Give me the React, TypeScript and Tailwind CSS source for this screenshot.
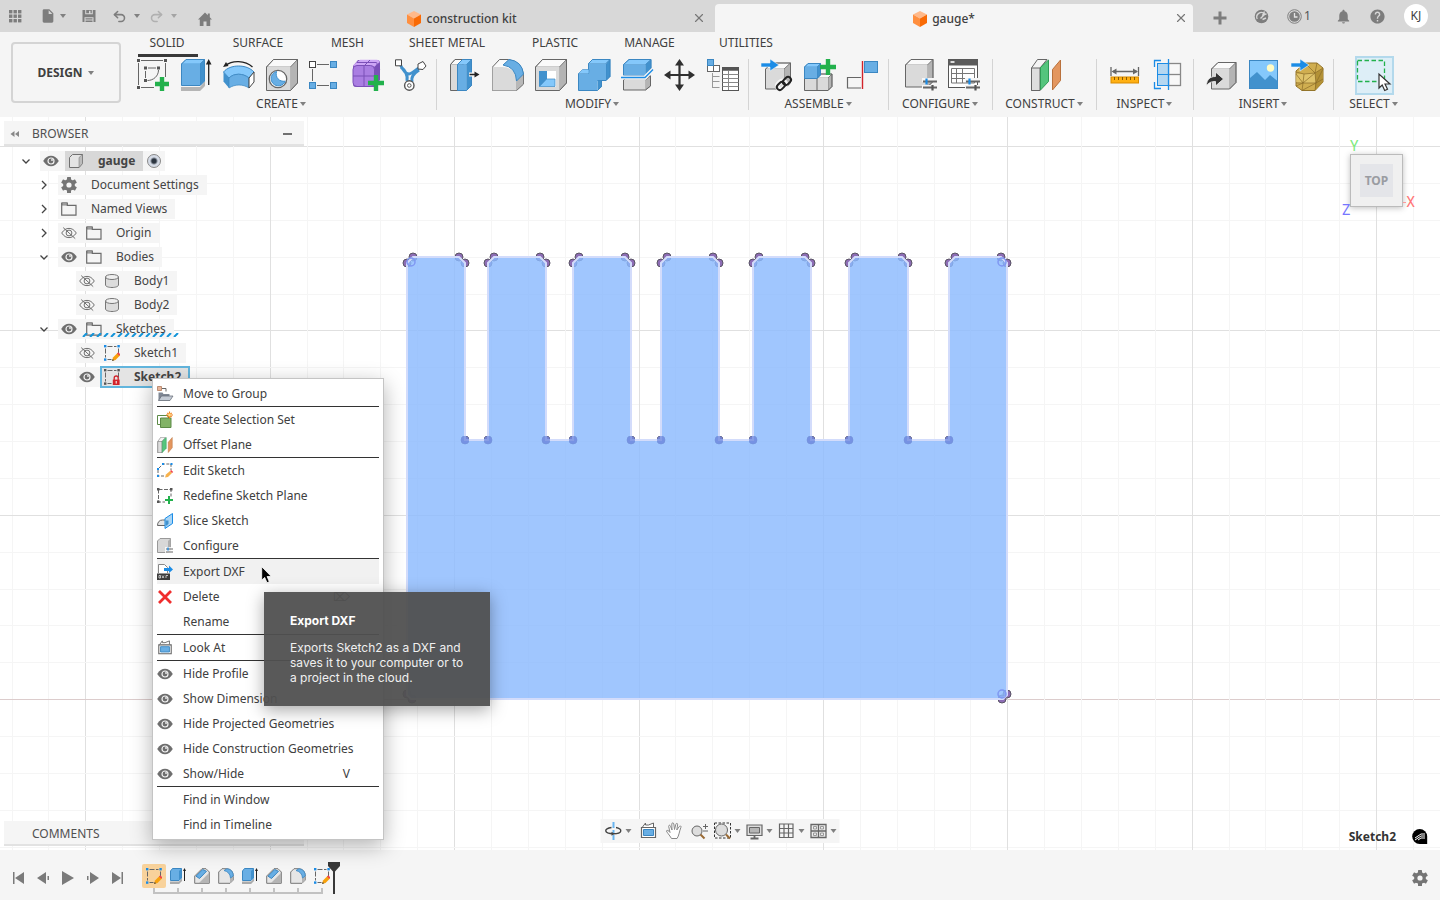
import React, { useState } from 'react';
import clsx from 'clsx';
import { MdVisibility, MdNotifications, MdHelp, MdInsertDriveFile } from 'react-icons/md';
import { Undo2, Redo2, X } from 'lucide-react';

const BLUE = '#68aee4';
const BLUE_DARK = '#4191cd';
const BLUE_LIGHT = '#84c8fb';
const LINE = '#666666';
const GREEN = '#22b14c';

/* ---------- small shared glyphs ---------- */

const Caret = ({ className = 'text-[#808080]' }: { className?: string }) => (
  <svg width="8" height="6" viewBox="0 0 8 6" className={clsx('shrink-0', className)} aria-hidden="true">
    <path d="M1 1h6L4 5z" fill="currentColor" />
  </svg>
);

const Gear = ({ size = 16 }: { size?: number }) => (
  <svg width={size} height={size} viewBox="0 0 16 16" aria-hidden="true">
    <g fill="#757575">
      {[0, 60, 120].map((a) => (
        <rect key={a} x="6" y="0" width="4" height="16" rx="0.6" transform={`rotate(${a} 8 8)`} />
      ))}
      <circle cx="8" cy="8" r="5.9" />
    </g>
    <circle cx="8" cy="8" r="2.6" fill="#f5f5f5" />
  </svg>
);

const EyeHidden = () => (
  <svg width="16" height="14" viewBox="0 0 16 14" fill="none" stroke="#707070" aria-hidden="true">
    <path d="M.7 7C3 3.6 5.3 2.4 8 2.4S13 3.6 15.3 7C13 10.4 10.7 11.6 8 11.6S3 10.4.7 7z" />
    <circle cx="8" cy="7" r="2.9" />
    <path d="M2.2 1.6l12 11" />
  </svg>
);

// the lens carries its own ring so that the pupil reads as a dark dot
const EyeOpen = () => (
  <svg width="16" height="12" viewBox="0 0 16 12" aria-hidden="true">
    <path d="M.2 6C2.500 2.300 5 .800 8 .800S13.500 2.300 15.800 6C13.500 9.700 11 11.200 8 11.200S2.500 9.700.2 6z" fill="#6e6e6e" />
    <circle cx="8" cy="6" r="3" fill="#6e6e6e" stroke="#f2f2f2" strokeWidth="1.200" />
    <circle cx="9" cy="5" r=".9" fill="#f2f2f2" />
  </svg>
);

const Folder = () => (
  <svg width="16" height="14" viewBox="0 0 16 14" fill="none" stroke="#6b6b6b" aria-hidden="true">
    <path d="M.7 1h5.6v2.4H15v9.8H.7z" strokeWidth="1.2" />
    <path d="M1 1h5.2v2H1z" fill="#bdbdbd" strokeWidth=".8" />
  </svg>
);

const ComponentCube = () => (
  <svg width="16" height="16" viewBox="0 0 16 16" stroke="#707070" strokeLinejoin="round" aria-hidden="true">
    <path d="M1.5 4.5L4.5 1.5h10v9l-3.5 4h-9.5z" fill="#e4e4e4" />
    <path d="M11 4.5v10l3.5-4v-9z" fill="#bcbcbc" strokeWidth=".5" />
  </svg>
);

const BodyIcon = () => (
  <svg width="16" height="16" viewBox="0 0 16 16" fill="#dcdcdc" stroke="#777" aria-hidden="true">
    <path d="M1.5 4v8c0 1.4 2.900 2.500 6.500 2.500s6.500-1.100 6.500-2.500V4" />
    <ellipse cx="8" cy="4" rx="6.500" ry="2.500" fill="#eee" />
  </svg>
);

const SketchIcon = ({ locked = false }: { locked?: boolean }) => (
  <svg width="16" height="16" viewBox="0 0 16 16" aria-hidden="true">
    <g fill="none" stroke="#666">
      <path d="M3.500 1.500h9M1.500 3.500v9M14.500 3.500v5M3.500 14.500h4" strokeDasharray="5 1.500" />
    </g>
    <g fill={locked ? '#555' : '#1b8ce6'}>
      <rect x="0" y="0" width="2.400" height="2.400" />
      <rect x="13.400" y="0" width="2.400" height="2.400" />
      <rect x="0" y="13.400" width="2.400" height="2.400" />
    </g>
    {locked ? (
      <g>
        <path d="M10.200 11V9a2 2 0 014 0v2" fill="none" stroke="#d2232a" strokeWidth="1.300" />
        <rect x="8.800" y="10.600" width="6.800" height="5.400" fill="#d2232a" />
        <path d="M12.200 12v2.600" stroke="#fff" />
      </g>
    ) : (
      <g>
        <path d="M8 16l1-3.500 4.500-4.500 2.500 2.500L11.500 15z" fill="#f7a10c" />
        <path d="M13 8.500l1.300-1.300 2.200 2.200-1.300 1.300z" fill="#f0414b" />
        <path d="M8 16l.7-2 1.500 1.300z" fill="#444" />
      </g>
    )}
  </svg>
);

const OrangeCube = () => (
  <svg width="14" height="16" viewBox="0 0 14 16" aria-hidden="true">
    <path d="M7 0l7 3.500L7 7.500 0 3.500z" fill="#ffb98a" />
    <path d="M0 3.500l7 4V16l-7-4z" fill="#ff8f3f" />
    <path d="M14 3.500l-7 4V16l7-4z" fill="#f96a05" />
  </svg>
);

const PlanesIcon = () => (
  <g strokeLinejoin="round">
    <path d="M3.500 9l6-8.500H19L12 9v22.500H3.500z" fill="#f4f4f4" stroke={LINE} />
    <path d="M3.500 9h8.500v22.500H3.500z" fill="#dedede" stroke={LINE} />
    <path d="M12.500 8.500l8-7.500v21.500l-8 8.500z" fill="#54c57d" stroke="#2f9c55" />
    <path d="M24.500 10.500l8-9.500v20.500l-8 9.500z" fill="#e3965f" stroke="#b9713c" />
  </g>
);

/* grey box with a light top and a darker right side */
interface BoxProps {
  x: number; y: number; w: number; h: number; dx: number; dy: number; blue?: boolean;
}
const Box3d = ({ x, y, w, h, dx, dy, blue }: BoxProps) => (
  <g stroke={blue ? '#3b87c2' : LINE} strokeLinejoin="round">
    <path d={`M${x} ${y}l${dx} ${-dy}h${w}l${-dx} ${dy}z`} fill={blue ? BLUE_LIGHT : '#fafafa'} strokeWidth=".6" />
    <path d={`M${x + w} ${y}l${dx} ${-dy}v${h}l${-dx} ${dy}z`} fill={blue ? BLUE_DARK : '#b4b4b4'} strokeWidth=".6" />
    <path d={`M${x} ${y}h${w}v${h}h${-w}z`} fill={blue ? BLUE : '#dadada'} stroke="none" />
    <path d={`M${x} ${y}l${dx} ${-dy}h${w}v${h}l${-dx} ${dy}h${-w}z`} fill="none" />
  </g>
);

const GreenPlus = ({ x, y, r = 7 }: { x: number; y: number; r?: number }) => (
  <path d={`M${x - r} ${y}h${2 * r}M${x} ${y - r}v${2 * r}`} stroke={GREEN} strokeWidth="4.400" fill="none" />
);

const Sliders = () => (
  <g fill="none">
    <path d="M19 21h17M19 28h17" stroke="#f5f5f5" strokeWidth="4" />
    <path d="M20 22.500h14M20 28.500h14" stroke="#666" strokeWidth="1.800" />
    <path d="M23.500 19.500v6" stroke="#1b8ce6" strokeWidth="2.200" />
    <path d="M29.500 26v5.500" stroke="#555" strokeWidth="2.200" />
  </g>
);

/* ---------- ribbon icons, 33 x 33 ---------- */

const icons: Record<string, React.ReactNode> = {
  sketch: (
    <g>
      <g fill="none" stroke={LINE}>
        <path d="M5 1.500h22M2.500 4v22M29.500 4v14M5 28.500h13M12 9h8M9.500 12v7" />
        <path d="M22.500 11c0 6-5 10.500-11 10.500" />
      </g>
      <g fill="#555">
        {[[1, 0], [28, 0], [1, 27], [8, 7.5], [21, 7.5], [8, 20]].map(([x, y]) => (
          <rect key={`${x}-${y}`} x={x} y={y} width="3" height="3" />
        ))}
      </g>
      <GreenPlus x={26} y={25} />
    </g>
  ),
  extrude: (
    <g>
      <path d="M2 28h19l5-6v5l-5 5H2z" fill="#b5b5b5" />
      <Box3d x={2.5} y={5} w={18.5} h={21.5} dx={4.5} dy={4.5} blue />
      <path d="M29.700 3v23" stroke="#222" strokeWidth="1.300" />
      <path d="M29.700 0l2.800 5.500h-5.600z" fill="#222" />
    </g>
  ),
  revolve: (
    <g strokeLinejoin="round">
      <path d="M3.500 6.500C10 1 23 1 30.500 8" fill="none" stroke="#222" strokeWidth="1.300" />
      <path d="M1 8l3-5 2.500 4z" fill="#222" />
      <path d="M1.500 13C8 5 25 5 32 13l-5 6c-6-5-15-5-20 0z" fill={BLUE_LIGHT} stroke="#3b87c2" />
      <path d="M1.500 13v9.500L7 29V19z" fill={BLUE_DARK} />
      <path d="M7 19c5-5 14-5 20 0v10c-6-4-14-4-20 0z" fill={BLUE} stroke="#3b87c2" strokeWidth=".7" />
      <path d="M27 19l5-6v10l-5 6z" fill="#fff" stroke="#444" />
    </g>
  ),
  hole: (
    <g>
      <Box3d x={1.5} y={8} w={24} h={23.5} dx={7} dy={7.5} />
      <circle cx="13" cy="20" r="8.700" fill="#fff" stroke={LINE} strokeWidth="1.300" />
      <path d="M11.500 12.500a7.300 7.300 0 108.700 9.700c-6 .8-10.200-3.700-8.700-9.700z" fill={BLUE} stroke={BLUE_DARK} />
    </g>
  ),
  pattern: (
    <g>
      <path d="M9 5.500h12M9 26.500h12M4.500 10v12" stroke={LINE} fill="none" />
      <rect x="1.500" y="2.500" width="6" height="6" fill="#fff" stroke="#444" />
      <g fill={BLUE} stroke="#3b87c2">
        <rect x="22.500" y="2.500" width="6" height="6" />
        <rect x="1.500" y="23.500" width="6" height="6" />
        <rect x="22.500" y="23.500" width="6" height="6" />
      </g>
    </g>
  ),
  form: (
    <g>
      <path d="M7 1h19q3 0 3 3v17l-6 7H5q-3 0-3-3V7z" fill="#7b50b8" />
      <path d="M9 .8h17q2.500.2 2.500 2.500L23 8H3q-1-1.500 0-2.500z" fill="#cda6f5" />
      <rect x="2" y="6.500" width="21.500" height="21" rx="4" fill="#aa7ee2" stroke="#7b50b8" />
      <path d="M2 17h21l6-7M13 27V7l6-6M6 3.500h19q1 0 1 1v19" fill="none" stroke="#7b50b8" />
      <GreenPlus x={25} y={24} r={8} />
    </g>
  ),
  pipe: (
    <g strokeLinejoin="round">
      <path d="M6 5c4 9 7 10 9 10s7-4 11-7M7 8c6 5 7 9 6 14M25 11c-6 4-8 7-7 12" fill="none" stroke={BLUE_DARK} strokeWidth="3" />
      <rect x="1.500" y=".8" width="6" height="6" fill="#fff" stroke="#444" />
      <path d="M24 5l5-2.500 3 4.500-3 3.500-5-.5z" fill="#fff" stroke="#444" />
      <circle cx="15.300" cy="26.500" r="4.700" fill="#fff" stroke="#555" strokeWidth="1.400" />
      <circle cx="15.300" cy="26.500" r="1.800" fill="none" stroke="#555" />
    </g>
  ),
  presspull: (
    <g>
      <Box3d x={3.5} y={5.5} w={8} h={26} dx={4.5} dy={5} />
      <Box3d x={10.5} y={5.5} w={9} h={26} dx={5} dy={5} blue />
      <path d="M22 15.500h7" stroke="#f5f5f5" strokeWidth="4" />
      <path d="M22.500 15.500H29" stroke="#222" strokeWidth="1.500" />
      <path d="M32.500 15.500l-5-3v6z" fill="#222" />
    </g>
  ),
  fillet: (
    <g strokeLinejoin="round">
      <path d="M2.500 8l7-7.500h9Q33 3 33.500 17v8l-7 6.500H2.500z" fill="#fafafa" stroke={LINE} />
      <path d="M26.500 20l7-6v11l-7 6.500z" fill="#b8b8b8" stroke={LINE} strokeWidth=".6" />
      <path d="M2.500 8h10q14 1 14 14v9.500h-24z" fill="#dadada" />
      <path d="M13 6l6-5.500Q32 2 33.500 15l-7 7Q26 8 13 6z" fill={BLUE} stroke="#3b87c2" />
    </g>
  ),
  shell: (
    <g>
      <Box3d x={2.5} y={8} w={24} h={23.5} dx={7} dy={7.5} />
      <rect x="6" y="12" width="17" height="16" fill="#fff" />
      <path d="M6 12h8v9l-8 7z" fill={BLUE_DARK} />
      <path d="M6.500 27.500l7-7.500H22v7.500z" fill={BLUE_LIGHT} stroke="#3b87c2" strokeWidth=".7" />
    </g>
  ),
  combine: (
    <g>
      <Box3d x={12.5} y={4.5} w={17.5} h={17} dx={4} dy={4} blue />
      <path d="M2.500 14.500l4-4H13v4z" fill={BLUE_LIGHT} stroke="#3b87c2" strokeWidth=".6" />
      <path d="M21.500 21.500h4.500v6l-4.500 4z" fill={BLUE_DARK} />
      <path d="M2.500 14.500h11v-2h8v19h-19z" fill={BLUE} />
      <path d="M2.500 14.500v17h19l4-4v-6" fill="none" stroke="#3b87c2" />
    </g>
  ),
  split: (
    <g>
      <Box3d x={4.5} y={21} w={22} h={10} dx={5} dy={4} />
      <Box3d x={4.5} y={5.5} w={22} h={11} dx={5.5} dy={5} blue />
      <path d="M2 18.500h24l8-8" fill="none" stroke="#f5f5f5" strokeWidth="4" />
      <path d="M2 18.500h24l8-8" fill="none" stroke="#1b8ce6" strokeWidth="1.400" />
    </g>
  ),
  move: (
    <g fill="#303030">
      <path d="M17.500 4v24M6 16h24" stroke="#303030" strokeWidth="2.200" />
      <path d="M17.500 0l4.500 6.500h-9zM17.500 32l4.500-6.500h-9zM2 16l6.500-4.500v9zM33 16l-6.500-4.500v9z" />
    </g>
  ),
  params: (
    <g fill="none" stroke={LINE}>
      <rect x="2.500" y="6.500" width="6" height="6" fill="#fff" />
      <rect x="8.500" y="6.500" width="6" height="6" fill="#fff" />
      <rect x="2.500" y=".5" width="6" height="6" fill={BLUE} stroke="#3b87c2" />
      <path d="M7.500 14v15M7.500 17.500h7M7.500 22.500h7M7.500 28.500h7" stroke="#999" />
      <rect x="17.500" y="8.500" width="16" height="23" fill="#fff" stroke="#555" />
      <path d="M17.500 10h16" stroke="#555" strokeWidth="3.500" />
      <path d="M17.500 15.500h16M17.500 19.500h16M17.500 23.500h16M17.500 27.500h16M23.500 12v19" stroke="#888" />
    </g>
  ),
  insertComponent: (
    <g>
      <Box3d x={6.5} y={10} w={18.5} h={20} dx={6.5} dy={6} />
      <path d="M2 4h9V0l9 6-9 6V8H2z" fill="#1b8ce6" stroke="#f5f5f5" strokeWidth=".6" />
      <g fill="none" stroke="#f5f5f5" strokeWidth="5">
        <rect x="18" y="23" width="9" height="6.500" rx="3.200" transform="rotate(-45 22.500 26.200)" />
      </g>
      <g fill="none" stroke="#222" strokeWidth="2">
        <rect x="17.500" y="24" width="9" height="5.800" rx="2.900" transform="rotate(-45 22 27)" />
        <rect x="23.500" y="19" width="9" height="5.800" rx="2.900" transform="rotate(-45 28 22)" />
      </g>
    </g>
  ),
  newComponent: (
    <g>
      <Box3d x={2.5} y={19} w={12.5} h={12.5} dx={3} dy={3} />
      <Box3d x={15} y={19} w={11} h={12.5} dx={4} dy={4} />
      <Box3d x={2.5} y={8} w={12.5} h={11.5} dx={3.5} dy={3.5} blue />
      <GreenPlus x={26} y={8} r={8} />
    </g>
  ),
  joint: (
    <g>
      <rect x="19.500" y="2.500" width="13" height="11" fill={BLUE} stroke="#3b87c2" />
      <path d="M16 18.500H2.500v10.500H16" fill="none" stroke={LINE} strokeWidth="1.200" />
      <path d="M17.500 2v28" stroke="#d2232a" strokeWidth="1.400" />
    </g>
  ),
  configure: (
    <g>
      <Box3d x={2.5} y={6} w={22} h={22} dx={5.5} dy={5.5} />
      <Sliders />
    </g>
  ),
  configTable: (
    <g>
      <rect x="2.500" y=".5" width="29" height="28" fill="#fff" stroke="#555" />
      <path d="M2 3.500h30" stroke="#5c5c5c" strokeWidth="6" />
      <path d="M4.500 3h4" stroke="#fff" strokeWidth="1.600" />
      <path d="M5.500 9.500h23v14.500h-23zM5.500 14.500h23M5.500 19.500h23M10.500 9.500V24M16.500 9.500V24" fill="none" stroke="#777" />
      <Sliders />
    </g>
  ),
  planes: <PlanesIcon />,
  measure: (
    <g>
      <path d="M4 8v9M31.500 8v9M6 12.500h24" stroke={LINE} strokeWidth="1.300" />
      <path d="M4.500 12.500l5-3v6zM31 12.500l-5-3v6z" fill={LINE} />
      <rect x="4" y="18" width="27.500" height="6" fill="#ffb012" stroke="#d98b00" />
      <path d="M7.500 18v3M11.500 18v3M15.500 18v3M19.500 18v3M23.500 18v3M27.500 18v3" stroke="#8a5a00" />
    </g>
  ),
  section: (
    <g fill="none">
      <rect x="18.500" y="4.500" width="12" height="22" fill="#f8f8f8" stroke="#888" strokeWidth="1.300" />
      <rect x="7.500" y="4.500" width="11" height="22" fill="#b4d7f1" stroke="#1b8ce6" />
      <path d="M7.500 15.500h11" stroke="#1b8ce6" />
      <path d="M18.500 15.500h12" stroke="#888" strokeWidth="1.300" />
      <path d="M11 1.500H4.500V8M4.500 23v6.500H11M18.500 0v31" stroke="#1b8ce6" strokeWidth="1.300" />
    </g>
  ),
  derive: (
    <g>
      <Box3d x={7.5} y={10} w={18} h={20} dx={6.5} dy={6.5} />
      <path d="M2.500 27c0-7 4-9.500 9-9.500V13l8 7-8 7v-4.500c-4 0-7 1-9 4.500z" fill="#333" stroke="#f5f5f5" strokeWidth=".8" />
    </g>
  ),
  canvas: (
    <g>
      <rect x="2.500" y="1.500" width="28" height="28" fill={BLUE_LIGHT} stroke="#3b87c2" />
      <path d="M3 19l7-6 8 8 5-5 7.500 6v7.500H3z" fill={BLUE_DARK} />
      <circle cx="23.500" cy="9" r="3.700" fill="#fffbc4" />
    </g>
  ),
  mesh: (
    <g strokeLinejoin="round">
      <path d="M6 12l9-8h12l6 5v14l-8 8.500H12L6 27z" fill="#d0ae50" stroke="#94752a" />
      <path d="M25 14l8-5v14l-8 8.500z" fill="#b39136" />
      <path d="M6 15l8 0-1 9-7-1zM14 15l11-1 1 10-13 0z" fill="#ead07c" opacity=".6" />
      <path d="M6 13l8 2 11-1 8-5M14 15l-1 9 12-10 1 10 7-14M6 24h20l7-4M13 24l-1 7.500L26 24l-1 7.500M6 15l7 9-7 3M15 4l10 10 2-10" fill="none" stroke="#8a6c28" strokeWidth=".7" />
      <path d="M1 4h9V0l9 6-9 6V8H1z" fill="#1b8ce6" stroke="#f5f5f5" strokeWidth=".6" />
    </g>
  ),
  select: (
    <g>
      <rect x="-.5" y="1.500" width="27" height="21" fill="none" stroke={GREEN} strokeWidth="1.300" strokeDasharray="4.500 2.500" />
      <path d="M21 15v14l3.200-3 2.500 5.500 2.800-1.200-2.500-5.300H32z" fill="#fff" stroke="#333" strokeWidth="1.200" />
    </g>
  ),
};

interface ToolGroup {
  name: string;
  tools: string[];
  width: string;
}

const toolGroups: ToolGroup[] = [
  { name: 'CREATE', tools: ['sketch', 'extrude', 'revolve', 'hole', 'pattern', 'form', 'pipe'], width: 'w-[309px]' },
  { name: 'MODIFY', tools: ['presspull', 'fillet', 'shell', 'combine', 'split', 'move', 'params'], width: 'w-[311px]' },
  { name: 'ASSEMBLE', tools: ['insertComponent', 'newComponent', 'joint'], width: 'w-[139px]' },
  { name: 'CONFIGURE', tools: ['configure', 'configTable'], width: 'w-[103px]' },
  { name: 'CONSTRUCT', tools: ['planes'], width: 'w-[103px]' },
  { name: 'INSPECT', tools: ['measure', 'section'], width: 'w-[96px]' },
  { name: 'INSERT', tools: ['derive', 'canvas', 'mesh'], width: 'w-[139px]' },
  { name: 'SELECT', tools: ['select'], width: 'w-[80px]' },
];

const ribbonTabs = [
  { name: 'SOLID', width: 'w-[80px]' },
  { name: 'SURFACE', width: 'w-[102px]' },
  { name: 'MESH', width: 'w-[77px]' },
  { name: 'SHEET METAL', width: 'w-[122px]' },
  { name: 'PLASTIC', width: 'w-[94px]' },
  { name: 'MANAGE', width: 'w-[95px]' },
  { name: 'UTILITIES', width: 'w-[98px]' },
];

/* ---------- header ---------- */

const DocumentTab = ({ title, active }: { title: string; active?: boolean }) => (
  <div className={clsx('flex flex-1 items-center', active ? 'mt-1 rounded-t-[4px] bg-[#f5f5f5] pr-1' : 'pt-1 pr-2')}>
    <button className="flex flex-1 items-center justify-center gap-[5px] pt-0.5 font-medium text-[#404040]">
      <OrangeCube />
      {title}
    </button>
    <button aria-label={`Close ${title}`} className="flex w-4 justify-center">
      <X size={14} color="#777" />
    </button>
  </div>
);

const Header = () => (
  <header className="flex h-8 shrink-0 bg-[#d8d8d8] text-[#7d7d7d]">
    <div className="flex w-[233px] items-center pl-2">
      <button aria-label="Data panel" className="mr-[18px]">
        <svg width="14" height="14" viewBox="0 0 14 14" fill="currentColor">
          {[1, 5.5, 10].map((x) => [1, 5.5, 10].map((y) => <rect key={`${x}${y}`} x={x} y={y} width="3.400" height="3.400" />))}
        </svg>
      </button>
      <button aria-label="File" className="flex items-center gap-[3px]">
        <MdInsertDriveFile size={16} />
        <Caret />
      </button>
      <button aria-label="Save" className="mr-4 ml-[15px]">
        <svg width="14" height="14" viewBox="0 0 14 14" fill="currentColor">
          <path d="M.5 1h2.700v4.300h7.600V1h2.700v12h-2V8.300h-9V13h-2z" />
          <path d="M4.200 1h5.600v3.300H8.500V1.800h-1.500v2.500H4.200zM3.500 9.300h7v1.300h-7zM3.500 11.600h7v1.400h-7z" />
        </svg>
      </button>
      <button aria-label="Undo" className="mr-2 flex items-center gap-1.5">
        <Undo2 size={15} strokeWidth={2.5} />
        <Caret />
      </button>
      <button aria-label="Redo" className="flex items-center gap-1.5 text-[#b0b0b0]">
        <Redo2 size={15} strokeWidth={2.5} />
        <Caret className="text-[#a4a4a4]" />
      </button>
      <button aria-label="Home" className="ml-5 pt-1.5">
        <svg width="14" height="14" viewBox="0 0 14 14" fill="currentColor">
          <path d="M7 .5l2.800 2.700V1.500h2v3.700L14 7.500h-1.800V14H8.500V9.500h-3V14H1.800V7.500H0z" />
        </svg>
      </button>
    </div>
    <DocumentTab title="construction kit" />
    <DocumentTab title="gauge*" active />
    <div className="flex w-[247px] items-center pl-5">
      <button aria-label="New tab" className="pt-1">
        <svg width="14" height="14" viewBox="0 0 14 14">
          <path d="M7 .5v13M.5 7h13" stroke="currentColor" strokeWidth="3" />
        </svg>
      </button>
      <button aria-label="Extensions" className="ml-[27px]">
        <svg width="15" height="15" viewBox="0 0 15 15">
          <circle cx="7.500" cy="7.500" r="6.800" fill="currentColor" />
          <path d="M3.200 10a4.600 4.600 0 017.300-5.300" stroke="#d8d8d8" strokeWidth="1.300" fill="none" />
          <path d="M6.500 9.500L11 5M8.500 10.500l3.500-1.500M10.500 2.500L9 5.500l3.500-.5" stroke="#d8d8d8" strokeWidth="1.400" fill="none" />
        </svg>
      </button>
      <button aria-label="Job status" className="ml-[18px] flex items-center gap-0.5 text-[#555]">
        <svg width="15" height="15" viewBox="0 0 15 15" fill="none">
          <circle cx="7.500" cy="7.500" r="6.800" stroke="#808080" />
          <circle cx="7.500" cy="7.500" r="5.300" fill="#808080" />
          <path d="M7.500 4v4h3" stroke="#e4e4e4" strokeWidth="1.300" />
        </svg>
        1
      </button>
      <button aria-label="Notifications" className="ml-6">
        <MdNotifications size={17} />
      </button>
      <button aria-label="Help" className="ml-[17px]">
        <MdHelp size={17} />
      </button>
      <button className="ml-[18px] size-6 rounded-full bg-white text-[#404040]">KJ</button>
    </div>
  </header>
);

/* ---------- ribbon ---------- */

const Ribbon = () => (
  <section className="flex h-[85px] shrink-0 overflow-hidden bg-[#f5f5f5] text-[#404040]">
    <button className="mt-[10px] mr-1.5 ml-[11px] flex h-[61px] w-[110px] shrink-0 items-center justify-center gap-1 rounded-[4px] border-2 border-[#d4d4d4] font-bold">
      DESIGN <Caret />
    </button>
    <div>
      <nav className="flex h-6 items-center">
        {ribbonTabs.map((tab, i) => (
          <button key={tab.name} className={clsx('relative h-6 shrink-0 pb-0.5', tab.width)}>
            {tab.name}
            {i === 0 && <span className="absolute -bottom-px left-[11px] h-[3px] w-[60px] bg-[#383838]" />}
          </button>
        ))}
      </nav>
      <div className="flex">
        {toolGroups.map((group, i) => (
          <React.Fragment key={group.name}>
            {i > 0 && <div className="mt-[3px] h-[51px] w-px shrink-0 bg-[#d4d4d4]" />}
            <div className={clsx('flex shrink-0 flex-col items-center', group.width)}>
              <div className="flex h-[39px]">
                {group.tools.map((tool) => (
                  <button
                    key={tool}
                    aria-label={tool}
                    className={clsx(
                      'flex items-center justify-center',
                      tool === 'select' ? 'w-[39px] border-2 border-[#b3d9ec] bg-[#ddeef7]' : 'w-[43px]'
                    )}
                  >
                    <svg width="33" height="33" viewBox="0 0 33 33" className="overflow-visible">
                      {icons[tool]}
                    </svg>
                  </button>
                ))}
              </div>
              <button className="flex h-[18px] items-center gap-px">
                {group.name} <Caret />
              </button>
            </div>
          </React.Fragment>
        ))}
      </div>
    </div>
  </section>
);

/* ---------- browser tree ---------- */

interface TreeNode {
  name: string;
  level: 'root' | 'group' | 'leaf';
  open?: boolean;
  visible?: boolean;
  icon: React.ReactNode;
  selected?: boolean;
}

const treeNodes: TreeNode[] = [
  { name: 'gauge', level: 'root', open: true, visible: true, icon: <ComponentCube /> },
  { name: 'Document Settings', level: 'group', open: false, icon: <Gear /> },
  { name: 'Named Views', level: 'group', open: false, icon: <Folder /> },
  { name: 'Origin', level: 'group', open: false, visible: false, icon: <Folder /> },
  { name: 'Bodies', level: 'group', open: true, visible: true, icon: <Folder /> },
  { name: 'Body1', level: 'leaf', visible: false, icon: <BodyIcon /> },
  { name: 'Body2', level: 'leaf', visible: false, icon: <BodyIcon /> },
  { name: 'Sketches', level: 'group', open: true, visible: true, icon: <Folder /> },
  { name: 'Sketch1', level: 'leaf', visible: false, icon: <SketchIcon /> },
  { name: 'Sketch2', level: 'leaf', visible: true, icon: <SketchIcon locked />, selected: true },
];

const indents = { root: 'pl-2', group: 'pl-[26px]', leaf: 'pl-[44px]' };

const TreeRow = ({ node }: { node: TreeNode }) => (
  <li className={clsx('flex h-5', indents[node.level])}>
    <button className="flex w-7 items-center justify-center" aria-label={`Expand ${node.name}`} disabled={node.open === undefined}>
      {node.open !== undefined && (
        <svg width="10" height="10" viewBox="0 0 10 10" fill="none" stroke="#444" strokeWidth="1.300">
          <path d={node.open ? 'M1.500 3.500L5 7l3.500-3.500' : 'M3 1l4 4-4 4'} />
        </svg>
      )}
    </button>
    <div className="relative flex bg-[#f5f5f5]">
      {node.visible !== undefined && (
        <button aria-label={`Toggle ${node.name}`} className="mr-[3px] flex w-[22px] items-center justify-center">
          {node.visible ? <EyeOpen /> : <EyeHidden />}
        </button>
      )}
      <button
        className={clsx(
          'flex items-center gap-[11px] pr-2',
          node.level === 'root' && 'bg-[#d8d8d8] font-bold',
          node.selected && 'bg-[#e4e4e4] font-bold outline-2 -outline-offset-1 outline-[#62b5dd]'
        )}
      >
        <span className="flex w-[22px] justify-center">{node.icon}</span>
        {node.name}
      </button>
      {node.level === 'root' && (
        <input
          type="radio"
          name="active-component"
          aria-label="Activate gauge"
          defaultChecked
          className="mx-1 size-3.5 appearance-none self-center rounded-full border border-[#888] bg-[radial-gradient(circle,#2c3540_0_2px,#d5dbe6_4px)]"
        />
      )}
      {node.name === 'Sketches' && (
        <svg className="absolute bottom-0.5 left-6 h-1 w-[98px]" aria-hidden="true">
          {Array.from({ length: 14 }, (_, i) => (
            <path key={i} d={`M${i * 7 + 1} 4l4-4`} stroke="#1494d8" strokeWidth="2" />
          ))}
        </svg>
      )}
    </div>
  </li>
);

const BrowserPanel = () => (
  <aside className="relative ml-1 flex w-[300px] flex-col justify-between pt-1 pb-1">
    <div>
      <div className="flex h-[25px] items-center border-b-2 border-[#e2e2e2] bg-[#f5f5f5] pt-0.5 pr-3 pl-1.5">
        <button aria-label="Collapse browser" className="mr-3">
          <svg width="10" height="8" viewBox="0 0 10 8" fill="#888">
            <path d="M4.500 1v6L.5 4zM9 1v6L5 4z" />
          </svg>
        </button>
        <h2 className="flex-1 text-[#505050]">BROWSER</h2>
        <button aria-label="Minimize browser" className="h-0.5 w-[9px] bg-[#707070]" />
      </div>
      <ul className="mt-[5px] flex flex-col gap-1">
        {treeNodes.map((node) => (
          <TreeRow key={node.name} node={node} />
        ))}
      </ul>
    </div>
    <div className="flex h-[25px] items-center border-b-2 border-[#e2e2e2] bg-[#f5f5f5] pt-0.5 pl-7 text-[#505050]">COMMENTS</div>
  </aside>
);

/* ---------- canvas ---------- */

// left and right edge of every tooth of the gauge
const teeth = [
  [407, 465], [488, 546], [573, 631], [661, 719], [753, 811], [849, 908], [949, 1007],
];
const TOP = 140;
const SLOT = 323;
const BOTTOM = 582;

const outline = () => {
  const pts: string[] = [`M407 ${BOTTOM - 4}`];
  teeth.forEach(([l, r], i) => {
    pts.push(`L${l} ${TOP + 6}L${l + 6} ${TOP}L${r - 6} ${TOP}L${r} ${TOP + 6}`);
    if (i < teeth.length - 1) {
      pts.push(`L${r} ${SLOT}L${teeth[i + 1][0]} ${SLOT}`);
    }
  });
  pts.push(`L1007 ${BOTTOM - 4}L1003 ${BOTTOM}L411 ${BOTTOM}Z`);
  return pts.join('');
};

const SketchPoint = ({ x, y }: { x: number; y: number }) => (
  <circle cx={x} cy={y} r="4" fill="#8d6db5" stroke="#5a5564" />
);

const SketchCanvas = () => {
  const d = outline();
  const gridLines = Array.from({ length: 80 }, (_, i) => i - 3);
  return (
    <svg className="absolute inset-0 h-full w-full" role="img" aria-label="Sketch2">
      <g shapeRendering="crispEdges">
        {gridLines.map((i) => (
          <React.Fragment key={i}>
            <rect x={Math.round(85.3 + i * 36.88)} y="0" width="1" height="100%" fill={i % 5 === 0 ? '#e0e0e0' : '#f5f5f5'} />
            <rect x="0" y={Math.round(29 + i * 36.88)} width="100%" height="1" fill={i === 15 ? '#dccccc' : i % 5 === 0 ? '#e0e0e0' : '#f5f5f5'} />
          </React.Fragment>
        ))}
      </g>
      {teeth.map(([l, r]) => (
        <g key={l}>
          <SketchPoint x={l} y={TOP + 6} />
          <SketchPoint x={l + 6} y={TOP} />
          <SketchPoint x={r - 6} y={TOP} />
          <SketchPoint x={r} y={TOP + 6} />
          {l !== 407 && <SketchPoint x={l} y={SLOT} />}
          {r !== 1007 && <SketchPoint x={r} y={SLOT} />}
        </g>
      ))}
      <SketchPoint x={1007} y={BOTTOM - 5} />
      <SketchPoint x={1002} y={BOTTOM} />
      <SketchPoint x={407} y={BOTTOM - 5} />
      <SketchPoint x={412} y={BOTTOM} />
      <path d={d} fill="#8bbafe" fillOpacity=".82" />
      <path d={d} fill="none" stroke="#d3dcfb" strokeWidth="2" />
      <g fill="#6f8ade" fillOpacity=".75">
        {teeth.map(([l, r]) => (
          <React.Fragment key={l}>
            {l !== 407 && <circle cx={l} cy={SLOT} r="4" />}
            {r !== 1007 && <circle cx={r} cy={SLOT} r="4" />}
          </React.Fragment>
        ))}
      </g>
      <g fill="none" stroke="#7f97f2" strokeWidth="1.500">
        <circle cx="411" cy={TOP + 5} r="4" />
        <circle cx="1002" cy={TOP + 5} r="4" />
        <circle cx="1002" cy={BOTTOM - 5} r="4" />
      </g>
    </svg>
  );
};

const ViewCube = () => (
  <div className="absolute top-[37px] right-[37px]">
    <button className="flex size-[53px] items-center justify-center border border-[#bbb] bg-[#f0f0f0] shadow-[0_1px_6px_rgba(0,0,0,.25)]">
      <span className="flex size-[33px] items-center justify-center bg-[#e4e5e9] font-bold text-[#9a9ca2]">TOP</span>
    </button>
    <span className="absolute -top-4 left-0 font-['Roboto',sans-serif] text-sm leading-4 text-[#7dea7d]">Y</span>
    <span className="absolute top-10 -right-3 font-['Roboto',sans-serif] text-sm leading-4 text-[#ff7676]">X</span>
    <span className="absolute top-12 -left-2 font-['Roboto',sans-serif] text-sm leading-4 text-[#7676ff]">Z</span>
    <span className="absolute top-12 -right-[3px] h-px w-[3px] bg-[#ff9a9a]" />
  </div>
);

const NavButton = ({ label, caret, children }: { label: string; caret?: boolean; children: React.ReactNode }) => (
  <button aria-label={label} className={clsx('flex items-center gap-0.5', caret ? 'ml-1' : 'ml-1.5 w-5 justify-center')}>
    <svg width="18" height="18" viewBox="0 0 18 18" fill="none" stroke="#666">
      {children}
    </svg>
    {caret && <Caret />}
  </button>
);

const LookAt = () => (
  <g>
    <path d="M3 5l3-4v2h3l5-2v4" fill="#fff" stroke="#666" />
    <path d="M2 5.500h14v10H2z" fill="#fff" stroke="#666" strokeWidth="1.200" />
    <path d="M4 7.500h10v6H4z" fill={BLUE} stroke="#3b87c2" />
  </g>
);

const NavBar = () => (
  <div className="absolute bottom-[7px] left-1/2 flex h-6 w-[239px] -translate-x-1/2 items-center justify-center bg-[#f5f5f5] pr-0.5">
    <NavButton label="Orbit" caret>
      <path d="M9 0v6M9 8v3M9 13v5" stroke="#68b4f0" strokeWidth="2" />
      <path d="M7 5.500C-1 6.500-1 11.500 9 11.800c9 0 9.500-5 2.500-6.300" stroke="#444" strokeWidth="1.400" />
      <path d="M7 13.800v-4l3 2z" fill="#444" stroke="none" />
    </NavButton>
    <NavButton label="Look at"><LookAt /></NavButton>
    <NavButton label="Pan">
      <path d="M6 16.500C4 13 1 10 1 9s2-1 3.500 1.500L3.200 4.500c-.2-1.500 1.300-1.800 1.800-.3L6.500 8 6.300 2c0-1.500 1.800-1.500 2 0L9 7.500l1.400-5.300c.4-1.400 2-1 1.700.5L11.300 8l2.500-3.500c.8-1.100 2.200-.4 1.600.9C14 8.500 13.500 14 11.500 16.500z" fill="#fff" stroke="#888" />
    </NavButton>
    <NavButton label="Zoom">
      <circle cx="6.500" cy="9" r="5" fill="#ddd" />
      <path d="M10 12.500l4 4" stroke="#9a6a34" strokeWidth="2" />
      <path d="M12.500 4.500h5M15 2v5M12.500 9h5" />
    </NavButton>
    <NavButton label="Zoom window" caret>
      <path d="M1 1h16v15H1z" strokeDasharray="2.500 1.500" stroke="#333" />
      <circle cx="8" cy="8" r="6" fill="#ddd" />
      <path d="M12.500 12.500l4 4" stroke="#9a6a34" strokeWidth="2" />
    </NavButton>
    <NavButton label="Display settings" caret>
      <path d="M1.500 3h15v10.500h-15z" fill="#ddd" strokeWidth="1.200" />
      <path d="M4 5.500h10v5.500H4z" fill="#b5b5b5" />
      <path d="M9 13.500V16M5 16.500h8" strokeWidth="1.800" />
    </NavButton>
    <NavButton label="Grid and snaps" caret>
      <path d="M2 2h13.500v13.500H2zM6.500 2v13.500M11 2v13.500M2 6.500h13.500M2 11h13.500" strokeWidth="1.200" />
    </NavButton>
    <NavButton label="Viewports" caret>
      <path d="M1.500 2.500h15v13h-15zM9 2.500v13M1.500 9h15" fill="#ececec" strokeWidth="1.300" />
      <path d="M4 4.500h3v2.500H4zM11 4.500h3v2.500h-3zM4 11h3v2.500H4zM11 11h3v2.500h-3z" stroke="#999" />
    </NavButton>
  </div>
);

/* ---------- context menu ---------- */

const MenuSvg = ({ children }: { children: React.ReactNode }) => (
  <svg width="16" height="16" viewBox="0 0 16 16" className="overflow-visible">{children}</svg>
);

interface MenuItem {
  label: string;
  icon?: React.ReactNode;
  hint?: string;
}

const menuSections: MenuItem[][] = [
  [
    {
      label: 'Move to Group',
      icon: (
        <MenuSvg>
          <path d="M.5.500h4v4h-4z" fill="#e7b59a" stroke="#b07a5c" strokeWidth=".8" />
          <path d="M5 2.500h4v3" fill="none" stroke="#666" />
          <path d="M1.500 14.500V6.500h4l1 1.500h6v6.500z" fill="#7f8794" />
          <path d="M1.500 14.500l3-4.500h11.500l-3 4.500z" fill="#c3cad4" stroke="#5f6670" strokeWidth=".7" />
        </MenuSvg>
      ),
    },
  ],
  [
    {
      label: 'Create Selection Set',
      icon: (
        <MenuSvg>
          <path d="M.5 3.500h11v9H.5z" fill="#fff" stroke="#5c8a46" />
          <path d="M3.500 6h10.500v9.500H3.500z" fill="#82b366" stroke="#5c8a46" />
          <path d="M12.500-.5v7M9 3h7M10.300.800l4.400 4.400M14.700.800l-4.400 4.400" stroke="#f0801c" strokeWidth="1.200" />
          <circle cx="12.500" cy="3" r="1.400" fill="#ffe08a" />
        </MenuSvg>
      ),
    },
    {
      label: 'Offset Plane',
      icon: (
        <svg width="16" height="16" viewBox="2 0 32 32">
          <PlanesIcon />
        </svg>
      ),
    },
  ],
  [
    {
      label: 'Edit Sketch',
      icon: (
        <MenuSvg>
          <path d="M1 7v6h6M2 5l4-4h8v6" fill="none" stroke="#666" strokeDasharray="3 1.500" />
          <path d="M0 5h2v2H0zM0 12h2v2H0zM5 0h2v2H5zM13.500 0h2v2h-2z" fill="#1b8ce6" />
          <path d="M8 14.500l1-3 4-3.500 2 2-4 4z" fill="#f7b24c" />
          <path d="M13 8l1.200-1 2 2-1.200 1z" fill="#f0414b" />
        </MenuSvg>
      ),
    },
    {
      label: 'Redefine Sketch Plane',
      icon: (
        <MenuSvg>
          <path d="M1.500 1.500h12.500v7M1.500 1.500v12.500H8" fill="none" stroke="#666" strokeDasharray="4 1.500" />
          <path d="M0 0h2.500v2.500H0zM13 0h2.500v2.500H13zM0 12.500h2.500V15H0z" fill="#555" />
          <path d="M12 8v8M8 12h8" stroke={GREEN} strokeWidth="2" />
        </MenuSvg>
      ),
    },
    {
      label: 'Slice Sketch',
      icon: (
        <MenuSvg>
          <path d="M.5 12.500c0-3.500 2-5.500 5-5.500h4v5.500z" fill="#e4e4e4" stroke="#666" />
          <path d="M8 5.500L15.500.500v10L8 15.500z" fill="#a9d5f5" stroke="#1b8ce6" />
          <path d="M8.500 7.500h3v3l-1.500 2H8.500z" fill="#4191cd" />
        </MenuSvg>
      ),
    },
    {
      label: 'Configure',
      icon: (
        <MenuSvg>
          <path d="M.5 3l2.500-2.500h10.500V12L11 14.500H.5z" fill="#d8d8d8" stroke="#999" />
          <path d="M11 3l2.500-2.500V12L11 14.500z" fill="#b0b0b0" />
          <path d="M8 9h8v7H8z" fill="#fff" fillOpacity=".8" />
          <path d="M9 11h7M9 14h7" stroke="#666" />
          <path d="M11 9.500v3" stroke="#1b8ce6" strokeWidth="1.300" />
        </MenuSvg>
      ),
    },
  ],
  [
    {
      label: 'Export DXF',
      icon: (
        <MenuSvg>
          <path d="M1.500 9V.500h6l3 3V9" fill="#fff" stroke="#888" />
          <path d="M7 4h5V1.500L16 5.500 12 9V7H7z" fill="#1b8ce6" />
          <path d="M0 9.500h13V16H0z" fill="#3c3c3c" />
          <path d="M2 11.500v2.500h1.500v-2.500zM5 11.500l2 2.500M7 11.500L5 14M9 14v-2.500h2" fill="none" stroke="#ddd" strokeWidth=".8" />
        </MenuSvg>
      ),
    },
    {
      label: 'Delete',
      icon: (
        <MenuSvg>
          <path d="M2 2l12 12M14 2L2 14" stroke="#f02d2d" strokeWidth="2.800" />
        </MenuSvg>
      ),
      hint: '⌦',
    },
    { label: 'Rename' },
  ],
  [
    {
      label: 'Look At',
      icon: <svg width="16" height="16" viewBox="0 0 18 18" fill="none"><LookAt /></svg>,
    },
  ],
  [
    { label: 'Hide Profile', icon: <EyeOpen /> },
    { label: 'Show Dimension', icon: <EyeOpen /> },
    { label: 'Hide Projected Geometries', icon: <EyeOpen /> },
    { label: 'Hide Construction Geometries', icon: <EyeOpen /> },
    { label: 'Show/Hide', icon: <EyeOpen />, hint: 'V' },
  ],
  [{ label: 'Find in Window' }, { label: 'Find in Timeline' }],
];

const ContextMenu = () => {
  const [active, setActive] = useState('Export DXF');
  return (
    <div role="menu" className="absolute top-[378px] left-[152px] w-[232px] border border-[#c4c4c4] bg-white px-1 py-0.5 text-[#404040] shadow-[0_6px_20px_rgba(0,0,0,.3)]">
      {menuSections.map((section, i) => (
        <div key={i} className={clsx(i > 0 && 'border-t border-[#333]')}>
          {section.map((item) => (
            <button
              key={item.label}
              role="menuitem"
              onClick={() => setActive(item.label)}
              className={clsx('flex h-[25px] w-full items-center text-left', active === item.label && 'bg-[#f1f1f1]')}
            >
              <span className="mr-2.5 flex w-4 justify-center *:shrink-0">{item.icon}</span>
              <span className="flex-1 whitespace-nowrap">{item.label}</span>
              {item.hint && <span className="mr-[29px]">{item.hint}</span>}
            </button>
          ))}
        </div>
      ))}
      <svg className="absolute top-[187px] left-[108px]" width="12" height="18" viewBox="0 0 12 18" aria-hidden="true">
        <path d="M.7.700v13.500l3-2.800 2.300 5.300 2.300-1-2.200-5.200h4.200z" fill="#000" stroke="#fff" strokeWidth=".8" />
      </svg>
      <div role="tooltip" className="absolute top-[213px] left-[111px] h-[114px] w-[226px] bg-[#505050]/95 px-[26px] pt-[21px] font-[Inter,sans-serif] text-xs leading-[15px] text-[#f0f0f0] shadow-[0_4px_16px_rgba(0,0,0,.35)]">
        <p className="mb-3 font-bold text-white">Export DXF</p>
        <p>Exports Sketch2 as a DXF and saves it to your computer or to a project in the cloud.</p>
      </div>
    </div>
  );
};

/* ---------- timeline ---------- */

const ExtrudeFeature = () => (
  <svg width="16" height="16" viewBox="0 0 16 16" aria-hidden="true">
    <path d="M0 13.500h9l3-3v2.500l-3 3H0z" fill="#aaa" />
    <path d="M.5 3l2-2.500h9v9.500L9 12.500H.5z" fill={BLUE} stroke="#3b87c2" />
    <path d="M9 3l2.500-2.500V10L9 12.500z" fill={BLUE_DARK} />
    <path d="M14.500 2v11" stroke="#222" />
    <path d="M14.500 0l1.500 3h-3z" fill="#222" />
  </svg>
);

const ChamferFeature = () => (
  <svg width="16" height="16" viewBox="0 0 16 16" strokeLinejoin="round" aria-hidden="true">
    <path d="M.7 8L8 .700h4L15.300 4v11.300H.7z" fill="#e6e6e6" stroke="#777" />
    <path d="M5 15L15 5v10z" fill="#b4b4b4" />
    <path d="M2 8.200L8.700 1.500l3.800 1.800-7 7.200z" fill={BLUE} stroke="#3b87c2" />
  </svg>
);

const FilletFeature = () => (
  <svg width="16" height="16" viewBox="0 0 16 16" strokeLinejoin="round" aria-hidden="true">
    <path d="M.7 4L4 .700h4q7.300 0 7.300 8V12L12 15.300H.7z" fill="#e6e6e6" stroke="#777" />
    <path d="M12 10l3.300-3v5L12 15.300z" fill="#b4b4b4" />
    <path d="M6 2.500L9 .700q6.300.8 6.300 7.300L12.500 10Q12 4 6 2.500z" fill={BLUE} stroke="#3b87c2" strokeWidth=".8" />
  </svg>
);

const features = [
  { name: 'Sketch1', icon: <SketchIcon /> },
  { name: 'Extrude1', icon: <ExtrudeFeature /> },
  { name: 'Chamfer1', icon: <ChamferFeature /> },
  { name: 'Fillet1', icon: <FilletFeature /> },
  { name: 'Extrude2', icon: <ExtrudeFeature /> },
  { name: 'Chamfer2', icon: <ChamferFeature /> },
  { name: 'Fillet2', icon: <FilletFeature /> },
  { name: 'Sketch2', icon: <SketchIcon /> },
];

const playback = [
  { name: 'Go to start', path: 'M3 2h1.500v12H3zM14 2v12L5 8z' },
  { name: 'Step back', path: 'M11 2v12L2 8zM12.500 6H14v4h-1.500z' },
  { name: 'Play', path: 'M2 1l12 7-12 7z' },
  { name: 'Step forward', path: 'M5 2v12l9-6zM2 6h1.500v4H2z' },
  { name: 'Go to end', path: 'M2 2v12l9-6zM11.500 2H13v12h-1.500z' },
];

const Timeline = () => (
  <footer className="flex h-[50px] shrink-0 bg-[#f5f5f5]">
    <div className="mr-4 ml-[10px] flex items-center gap-[9px] pt-[5px]">
      {playback.map((p) => (
        <button key={p.name} aria-label={p.name}>
          <svg width="16" height="16" viewBox="0 0 16 16" fill="#7a7a7a">
            <path d={p.path} />
          </svg>
        </button>
      ))}
    </div>
    <ol className="flex pt-[14px]">
      {features.map((f, i) => (
        <li key={f.name} className="flex w-6 flex-col items-center">
          <button
            aria-label={f.name}
            className={clsx('flex size-6 items-center justify-center', i === 0 && 'rounded-[2px] bg-[#f8d29b]')}
          >
            {f.icon}
          </button>
          <span className="h-1 w-0.5 bg-[#c2c2c2]" />
          <span
            className={clsx(
              'h-0.5 bg-[#c2c2c2]',
              i === 0 && 'w-[13px] self-end',
              i === features.length - 1 && 'w-[13px] self-start',
              i > 0 && i < features.length - 1 && 'w-full'
            )}
          />
        </li>
      ))}
    </ol>
    <svg width="12" height="32" viewBox="0 0 12 32" className="mt-3 -ml-1.5" fill="#383838" aria-hidden="true">
      <path d="M0 0h12v4L7 9.500V32H5V9.500L0 4z" />
    </svg>
    <button aria-label="Timeline settings" className="mr-3 ml-auto pt-[5px]">
      <Gear />
    </button>
  </footer>
);

const App: React.FC = () => (
  <div className="relative flex h-screen flex-col overflow-hidden bg-white font-['Noto_Sans',sans-serif] text-xs leading-4 text-[#444]">
    <Header />
    <Ribbon />
    <main className="relative flex min-h-0 flex-1">
      <SketchCanvas />
      <BrowserPanel />
      <ViewCube />
      <NavBar />
      <div className="relative mt-auto mr-3 mb-[5px] ml-auto flex items-center gap-4 font-bold text-[#333]">
        Sketch2
        <svg width="16" height="16" viewBox="0 0 16 16" aria-hidden="true">
          <path d="M7.700 0A7.500 7.500 0 0115.200 7.500V15H7.700a7.500 7.500 0 010-15z" fill="#000" />
          <path d="M3 9l6-4h4M3 11l6-4h4M6 11l3-2h4" fill="none" stroke="#fff" />
        </svg>
      </div>
    </main>
    <Timeline />
    <ContextMenu />
  </div>
);

export default App;
